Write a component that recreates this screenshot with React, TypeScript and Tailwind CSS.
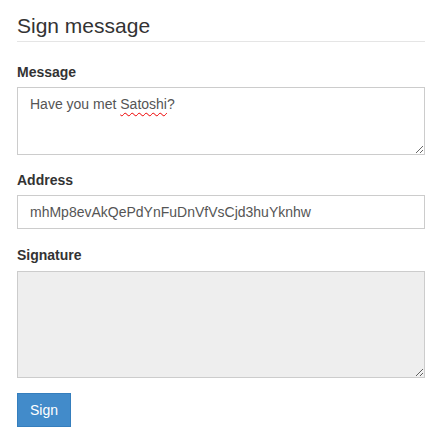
export default function App() {
  return (
    <div className="min-h-screen bg-white px-[17px] pt-[11px] font-['Liberation_Sans',Arial,sans-serif] text-[14px] leading-[20px] text-[#333]">
      <form className="w-[408px]" onSubmit={e => e.preventDefault()}>
        <fieldset>
          <legend className="mb-[20px] block w-full border-b border-[#e5e5e5] pb-0 text-[21px] leading-[30px] text-[#333]">Sign message</legend>

          <div className="mb-[15px]">
            <label className="mb-[5px] block font-bold">Message</label>
            <div className="h-[68px] w-full resize-y overflow-auto border border-[#ccc] bg-white px-[12px] py-[6px] text-[#555]">
              Have you met <span className="underline decoration-[#e00] decoration-wavy decoration-1 underline-offset-[3px]">Satoshi</span>?
            </div>
          </div>

          <div className="mb-[16px]">
            <label className="mb-[5px] block font-bold">Address</label>
            <input
              className="block h-[34px] w-full border border-[#ccc] bg-white px-[12px] py-[6px] text-[#555] outline-none"
              defaultValue="mhMp8evAkQePdYnFuDnVfVsCjd3huYknhw"
            />
          </div>

          <div className="mb-[15px]">
            <label className="mb-[6px] block font-bold">Signature</label>
            <textarea readOnly className="block h-[107px] w-full border border-[#ccc] bg-[#eee] px-[12px] py-[6px] text-[#555] outline-none" />
          </div>

          <button type="submit" className="h-[34px] border border-[#357ebd] bg-[#428bca] px-[12px] text-white">Sign</button>
        </fieldset>
      </form>
    </div>
  );
}
